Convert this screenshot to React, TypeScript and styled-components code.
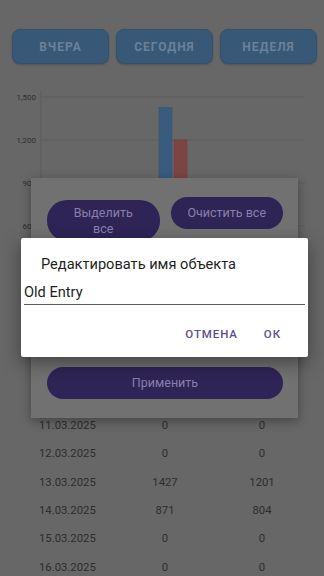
import styled, { createGlobalStyle } from "styled-components";

const GlobalStyle = createGlobalStyle`
  html, body {
    margin: 0;
    padding: 0;
    background: #676767;
    font-family: Roboto, "Noto Sans", "Liberation Sans", sans-serif;
  }
`;

const SScreen = styled.div`
  position: relative;
  width: 324px;
  height: 576px;
  overflow: hidden;
  background: #676767;
`;

const STabs = styled.div`
  display: grid;
  grid-template-columns: repeat(3, 1fr);
  gap: 7px;
  padding: 29px 7px 0 12px;
`;

const STab = styled.button`
  height: 35px;
  border: 1px solid #33506c;
  border-radius: 8px;
  background: #385877;
  color: #6a819a;
  font-family: Roboto, sans-serif;
  font-weight: 700;
  font-size: 12px;
  letter-spacing: 1px;
  padding: 0;
  box-shadow: 0 1px 2px rgba(0, 0, 0, 0.2);
`;

const SChart = styled.svg`
  display: block;
  width: 324px;
  height: 262px;
`;

const STable = styled.div`
  display: flex;
  flex-direction: column;
`;

const SRow = styled.div`
  display: grid;
  grid-template-columns: 78px 96px 98px;
  height: 28.4px;
  align-items: center;
  padding-left: 39px;
  font-size: 11.3px;
  color: #2d2d2d;
`;

const SCell = styled.span<{ $center?: boolean }>`
  text-align: ${(p) => (p.$center ? "center" : "left")};
`;

const SPanel = styled.div`
  position: absolute;
  left: 31px;
  top: 178px;
  width: 267px;
  height: 240px;
  box-sizing: border-box;
  background: #717171;
  box-shadow: 0 3px 10px rgba(0, 0, 0, 0.35);
  padding: 19px 15px 19px 16px;
  display: flex;
  flex-direction: column;
`;

const SPanelRow = styled.div`
  display: grid;
  grid-template-columns: 1fr 1fr;
  gap: 11px;
  align-items: start;
`;

const SPill = styled.button<{ $tall?: boolean }>`
  height: ${(p) => (p.$tall ? "41px" : "32px")};
  margin-top: ${(p) => (p.$tall ? "3px" : "0")};
  border: none;
  border-radius: 20px;
  background: #2f2456;
  color: #8a80ab;
  font-family: Roboto, sans-serif;
  font-size: 12.5px;
  line-height: 16px;
  padding: 0 ${(p) => (p.$tall ? "24px" : "6px")};
  white-space: ${(p) => (p.$tall ? "normal" : "nowrap")};
`;

const SList = styled.div`
  flex: 1;
`;

const SApply = styled(SPill)`
  height: 32px;
  width: 100%;
  margin: 0;
`;

const SDialog = styled.div`
  position: absolute;
  left: 21px;
  top: 238px;
  width: 287px;
  height: 119px;
  box-sizing: border-box;
  background: #ffffff;
  border-radius: 2px;
  box-shadow: 0 6px 18px rgba(0, 0, 0, 0.4);
  display: flex;
  flex-direction: column;
  padding: 16px 3px 0 3px;
`;

const STitle = styled.h2`
  margin: 0 0 0 17px;
  font-size: 14.6px;
  font-weight: 400;
  color: #1f1f1f;
  line-height: 20px;
`;

const SInput = styled.input`
  margin-top: 9px;
  width: 281px;
  box-sizing: border-box;
  border: none;
  border-bottom: 1.5px solid #5c5c5c;
  outline: none;
  padding: 0 0 3px 0;
  font-family: Roboto, sans-serif;
  font-size: 14.6px;
  color: #1f1f1f;
  background: transparent;
`;

const SActions = styled.div`
  display: flex;
  justify-content: flex-end;
  gap: 26px;
  padding: 22px 24px 0 0;
`;

const SAction = styled.button`
  border: none;
  background: none;
  padding: 0;
  line-height: 14px;
  font-family: Roboto, sans-serif;
  font-weight: 500;
  font-size: 11.5px;
  letter-spacing: 0.9px;
  color: #5b4f8f;
`;

const rows = [
  ["08.03.2025", "0", "0"],
  ["09.03.2025", "0", "0"],
  ["10.03.2025", "0", "0"],
  ["11.03.2025", "0", "0"],
  ["12.03.2025", "0", "0"],
  ["13.03.2025", "1427", "1201"],
  ["14.03.2025", "871", "804"],
  ["15.03.2025", "0", "0"],
  ["16.03.2025", "0", "0"],
];

const Chart = () => {
  // svg starts at page y 64; the 1,500 line sits at page y 97
  const top = 33;
  const step = 43;
  const labels = ["1,500", "1,200", "900", "600", "300", "0"];
  const y = (v: number) => top + ((1500 - v) / 300) * step;
  return (
    <SChart viewBox="0 0 324 262">
      <line x1={41} y1={top - 6} x2={41} y2={y(0)} stroke="#5c5c5c" strokeWidth={1} />
      {labels.map((l, i) => (
        <g key={l}>
          <line x1={41} x2={305} y1={top + i * step} y2={top + i * step} stroke="#5e5e5e" strokeWidth={1} />
          <text
            x={36}
            y={top + i * step + 3}
            textAnchor="end"
            fontSize={8}
            fill="#2e2e2e"
            fontFamily="Roboto, sans-serif"
          >
            {l}
          </text>
        </g>
      ))}
      <rect x={159} y={y(1427)} width={13} height={y(0) - y(1427)} fill="#3a5b80" stroke="#34506f" strokeWidth={0.5} />
      <rect x={174} y={y(1201)} width={13} height={y(0) - y(1201)} fill="#7d4444" stroke="#6f3c3c" strokeWidth={0.5} />
    </SChart>
  );
};

const App = () => {
  return (
    <SScreen>
      <GlobalStyle />
      <STabs>
        <STab>ВЧЕРА</STab>
        <STab>СЕГОДНЯ</STab>
        <STab>НЕДЕЛЯ</STab>
      </STabs>
      <Chart />
      <STable>
        {rows.map(([d, a, b]) => (
          <SRow key={d}>
            <SCell>{d}</SCell>
            <SCell $center>{a}</SCell>
            <SCell $center>{b}</SCell>
          </SRow>
        ))}
      </STable>

      <SPanel>
        <SPanelRow>
          <SPill $tall>Выделить все</SPill>
          <SPill>Очистить все</SPill>
        </SPanelRow>
        <SList />
        <SApply>Применить</SApply>
      </SPanel>

      <SDialog>
        <STitle>Редактировать имя объекта</STitle>
        <SInput defaultValue="Old Entry" />
        <SActions>
          <SAction>ОТМЕНА</SAction>
          <SAction>ОК</SAction>
        </SActions>
      </SDialog>
    </SScreen>
  );
};

export default App;
